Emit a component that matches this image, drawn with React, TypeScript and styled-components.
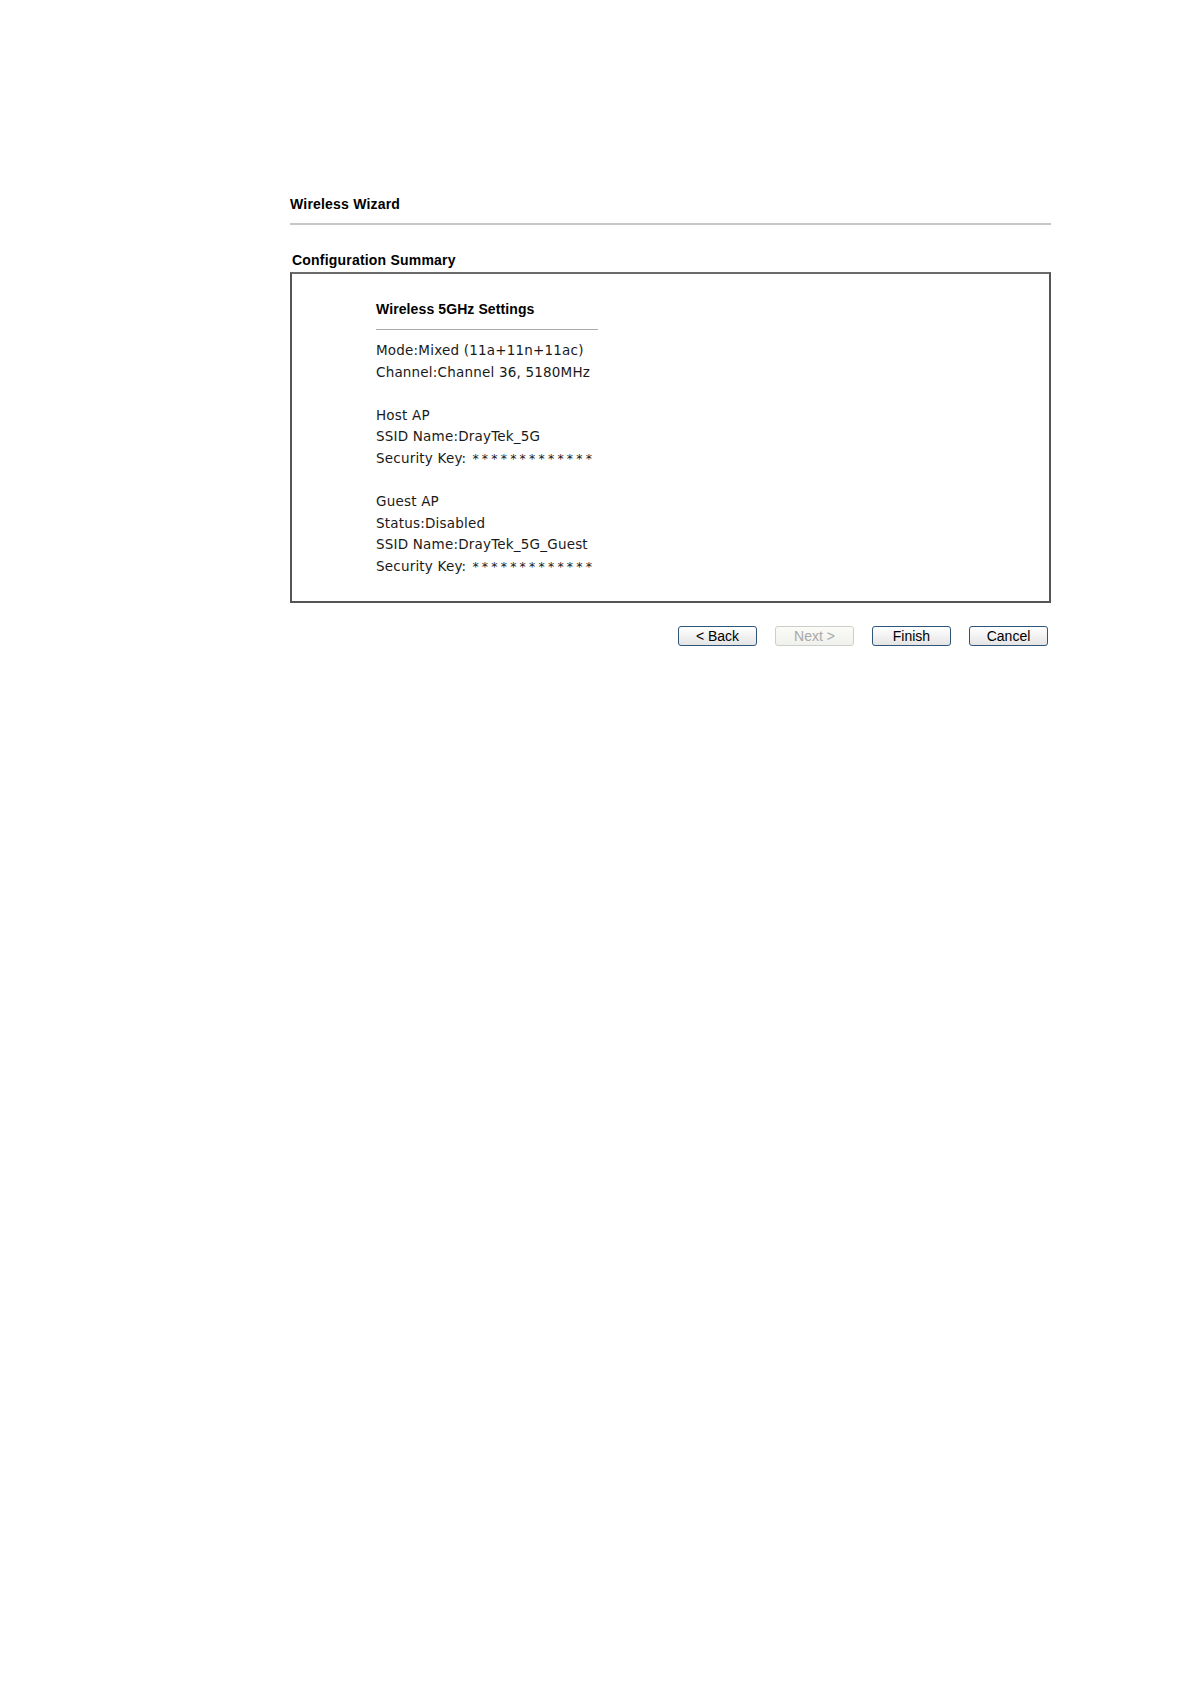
import React from "react"
import styled, { createGlobalStyle } from "styled-components"

const GlobalStyle = createGlobalStyle`
  html, body {
    margin: 0;
    padding: 0;
    background: #ffffff;
  }
`

const Page = styled.div`
  width: 761px;
  padding: 197px 0 0 290px;
  font-family: "Liberation Sans", Arial, sans-serif;
  color: #000;
`

const Heading = styled.div<{ indent?: number }>`
  font-size: 14px;
  font-weight: bold;
  line-height: 15px;
  letter-spacing: 0.2px;
  padding-left: ${(p) => p.indent || 0}px;
`

const Rule = styled.div`
  margin-top: 11px;
  border-top: 2px solid #c6c6c6;
`

const SectionTitle = styled(Heading)`
  margin-top: 28px;
  margin-bottom: 4px;
`

const Box = styled.div`
  box-sizing: border-box;
  height: 331px;
  border: 2px solid #555555;
  border-top-color: #6a6a6a;
  padding: 28px 0 0 84px;
`

const InnerTitle = styled.div`
  font-size: 14px;
  font-weight: bold;
  line-height: 15px;
  letter-spacing: 0.1px;
  width: 222px;
  padding-bottom: 12px;
  border-bottom: 1px solid #a8a8a8;
`

const Lines = styled.div`
  margin-top: 10px;
  font-family: "DejaVu Sans", Verdana, sans-serif;
  font-size: 13.5px;
  letter-spacing: 0.2px;
  line-height: 21.6px;
  color: #1a1a1a;
`

const Line = styled.div`
  height: 21.6px;
  white-space: pre;
`

const Mask = styled.span`
  margin-left: 6px;
  letter-spacing: 3.2px;
  font-size: 12.5px;
`

const Buttons = styled.div`
  display: flex;
  justify-content: flex-end;
  gap: 18px;
  margin-top: 23px;
  padding-right: 3px;
`

const Button = styled.button`
  box-sizing: border-box;
  width: 79px;
  height: 20px;
  padding: 0;
  font-family: "Liberation Sans", Arial, sans-serif;
  font-size: 14px;
  line-height: 18px;
  color: #000;
  border: 1px solid #2f5679;
  border-radius: 3px;
  background: linear-gradient(#ffffff, #f2f2f2 50%, #e4e4e4);
  &:disabled {
    color: #a8a8a8;
    border-color: #c9d0c9;
    background: linear-gradient(#fbfbf8, #f0f0ec);
  }
`

const summary: [string, string?][] = [
  ["Mode:Mixed (11a+11n+11ac)"],
  ["Channel:Channel 36, 5180MHz"],
  [""],
  ["Host AP"],
  ["SSID Name:DrayTek_5G"],
  ["Security Key:", "*************"],
  [""],
  ["Guest AP"],
  ["Status:Disabled"],
  ["SSID Name:DrayTek_5G_Guest"],
  ["Security Key:", "*************"],
]

const App: React.FC = () => {
  return (
    <>
      <GlobalStyle />
      <Page>
        <Heading>Wireless Wizard</Heading>
        <Rule />
        <SectionTitle indent={2}>Configuration Summary</SectionTitle>
        <Box>
          <InnerTitle>Wireless 5GHz Settings</InnerTitle>
          <Lines>
            {summary.map(([text, secret], i) => (
              <Line key={i}>
                {text}
                {secret && <Mask>{secret}</Mask>}
              </Line>
            ))}
          </Lines>
        </Box>
        <Buttons>
          <Button>&lt; Back</Button>
          <Button disabled>Next &gt;</Button>
          <Button>Finish</Button>
          <Button>Cancel</Button>
        </Buttons>
      </Page>
    </>
  )
}

export default App
